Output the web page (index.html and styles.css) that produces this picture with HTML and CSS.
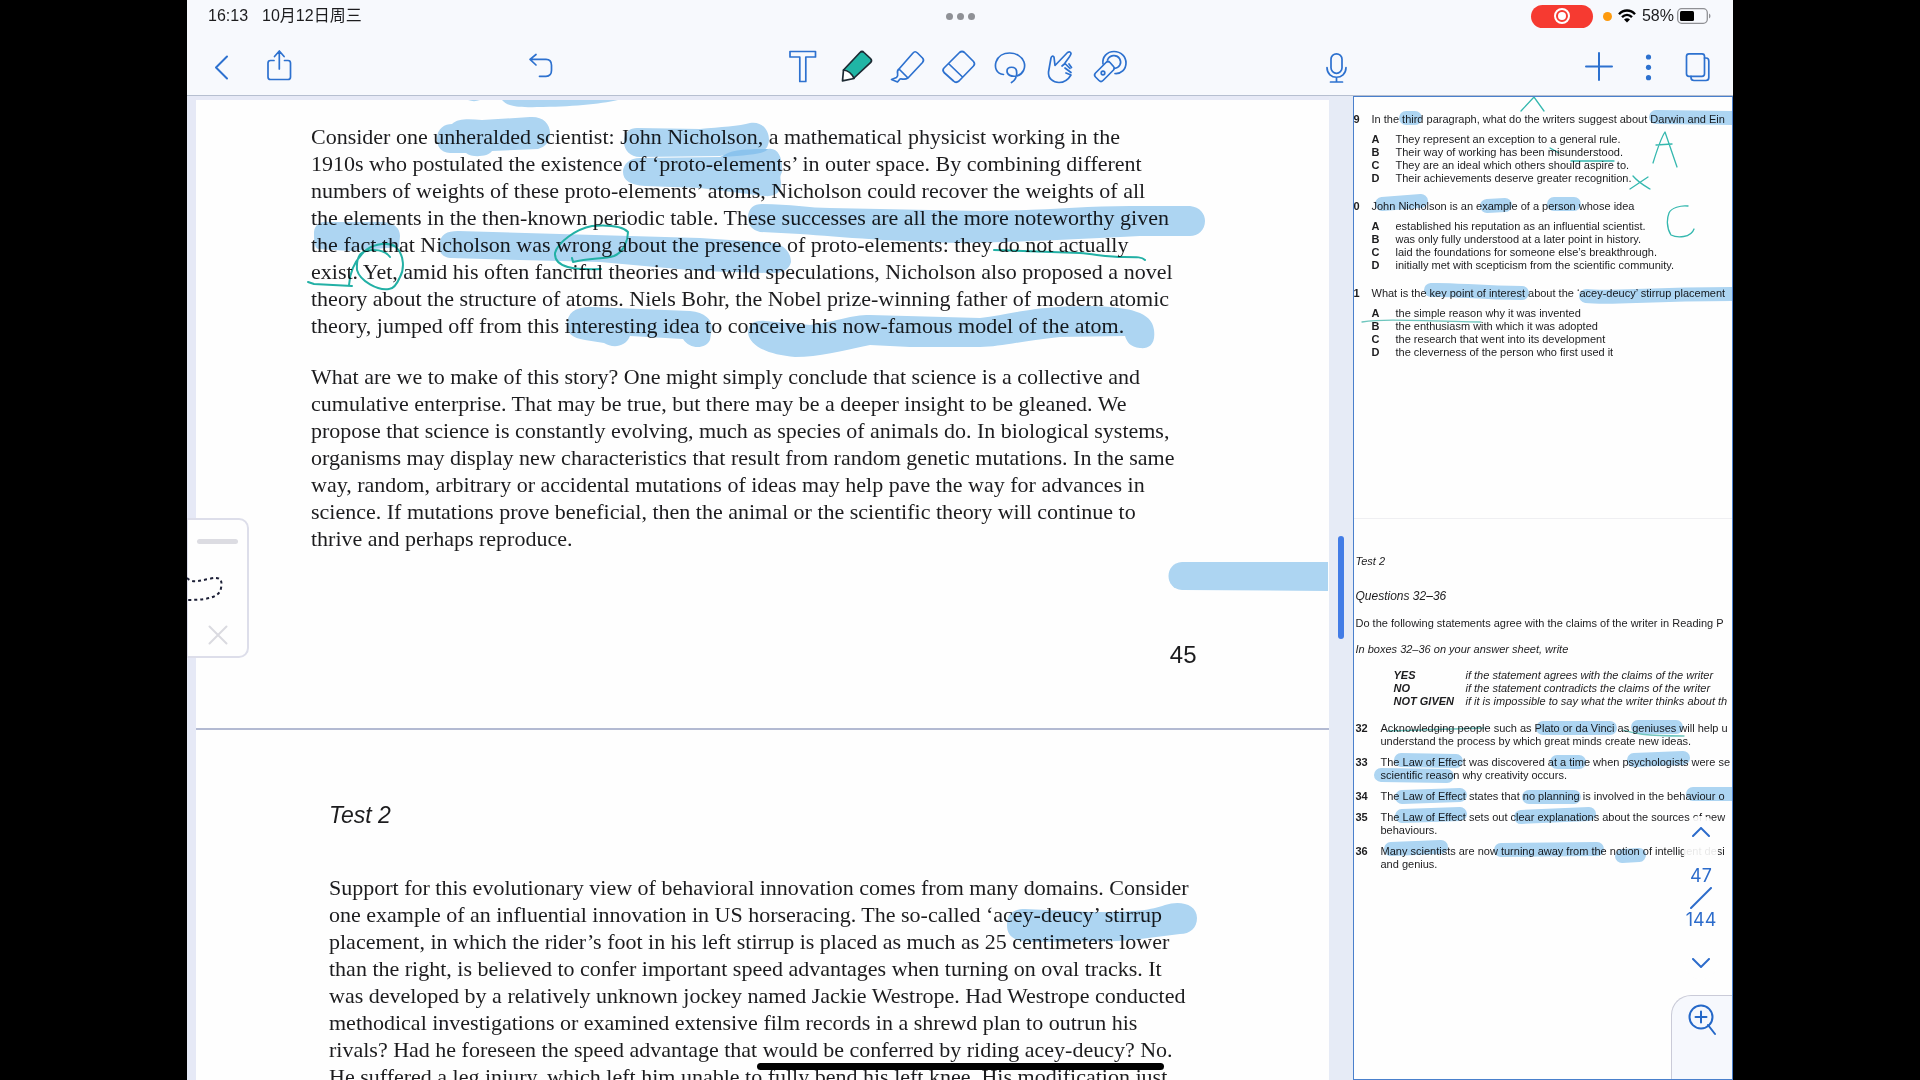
FILE: index.html
```html
<!DOCTYPE html>
<html lang="en">
<head>
<meta charset="utf-8">
<title>Notes</title>
<link rel="stylesheet" href="styles.css">
</head>
<body>
<div class="app">
  <header class="chrome">
    <div class="status">
      <div class="clock"><span>16:13</span><span>10月12日周三</span></div>
      <button class="multitask" aria-label="Multitasking"><i></i><i></i><i></i></button>
      <div class="indicators">
        <span class="record"><svg width="18" height="18" viewBox="0 0 18 18"><circle cx="9" cy="9" r="7" fill="none" stroke="#fff" stroke-width="2"/><circle cx="9" cy="9" r="4" fill="#fff"/></svg></span>
        <span class="orange"></span>
        <svg class="wifi" width="18" height="14" viewBox="0 0 18 14"><g fill="none" stroke="#000" stroke-width="2.4"><path d="M1 5.2C5.500 .3 12.500 .3 17 5.200"/><path d="M4 8.200c3-3 7-3 10 0"/></g><path d="M6 10.400c2-1.700 4-1.700 6 0L9 13.600z"/></svg>
        <span class="percent">58%</span>
        <svg class="battery" width="35" height="16" viewBox="0 0 35 16"><rect x=".7" y=".7" width="29.600" height="14.600" rx="4" fill="none" stroke="#8f9094" stroke-width="1.300"/><rect x="3" y="3" width="14" height="10" rx="1.500"/><path d="M32 5.500c2 1 2 4 0 5z" fill="#8f9094"/></svg>
      </div>
    </div>
    <nav class="toolbar" aria-label="Note tools">
      <div class="group nav-left">
        <button class="tool" aria-label="Back"><svg viewBox="205 50 34 34"><path d="M227 56.500 216 67.500 227 78.500" stroke-width="2"/></svg></button>
        <button class="tool" aria-label="Share"><svg viewBox="263 50 34 34"><path d="M274 60.500h-3.500q-2.500 0-2.500 2.500v14q0 2.500 2.500 2.500h17.500q2.500 0 2.500-2.500V63q0-2.500-2.500-2.500H284.500M279.300 69V51M274.500 56.500l4.800-5.500 4.800 5.500"/></svg></button>
      </div>
      <div class="group undo">
        <button class="tool" aria-label="Undo"><svg viewBox="525 50 34 34"><path d="M536 54.500 530 59.300 536 65M530 59.300H546q5.500 0 5.500 6v5q0 6-5.500 6H539.500"/></svg></button>
      </div>
      <div class="group tools">
        <button class="tool" aria-label="Text"><svg viewBox="786 50 34 34"><path d="M790 51.500h25.500V57h-9.700v24.500h-6V57H790z"/></svg></button>
        <button class="tool" aria-label="Pen"><svg viewBox="837 50 34 34"><path d="M843.500 70 860 52.500q2-2 4 0l6.500 6q2 2 0 4.200L854 78z" fill="#20b5a5" stroke="#1d2a33"/><path d="M843.500 70 842.500 80.800 854 78.500C852 74 848 70.500 843.500 70z" fill="#fff" stroke="#1d2a33"/></svg></button>
        <button class="tool" aria-label="Highlighter"><svg viewBox="888 50 34 34"><path d="M899 69 913 53q2-2.500 4.500 0l5 5q2 2 0 4.500L908 78zM899 69c-4 3 1 6-2.500 8.500L891.500 79.500l6 2.500 2.500-3c3-.5 4 1.500 8-1"/></svg></button>
        <button class="tool" aria-label="Eraser"><svg viewBox="939 50 34 34"><path d="M944 68 959.500 52.500q2.500-2 5 0l9 9q2 2.500 0 4.500L959 81q-3 2.500-5.500 0l-9.500-8.500q-2-2.500 0-4.500zM949 64 962.500 77"/></svg></button>
        <button class="tool" aria-label="Lasso"><svg viewBox="990 50 34 34"><path d="M1003.500 74.500C996 74 994.500 67 996 62c4-12 23-12 28 0 2 6-1 12-7 14-6 1-10-1-10-5 0-5 9-5 9.500 0 1 6-1 9-5 11.500"/></svg></button>
        <button class="tool" aria-label="Pointer"><svg viewBox="1041 50 34 34"><path d="M1048.500 72 1051 58q1-3 3-1l1 8.500L1067.500 52.500q3-1.500 3.500 1c0 2-3 5-6 9.500M1062 66l3-2.500 5 5M1065 68l6 4.500M1069 64l2.500 3.500M1066 73l5 2C1068 80 1065 82.500 1059 82.500c-6 0-11-4-10.500-10.500"/></svg></button>
        <button class="tool" aria-label="Tape"><svg viewBox="1092 50 34 34"><path d="M1103 64C1102 57 1107 51.500 1114 51.500c7 0 12 5 12 11.500s-5 11-11 10.500M1107.500 60c2-5 9-6 12-1.500 3 5-.5 9.500-5 10"/><path d="M1095.500 73 1106 62.500q2-2 4 0l3.500 4q1.500 1.500 0 3.500L1103 80.500q-2 2-4 0l-3.500-3.500q-2-2 0-4z"/><circle cx="1103" cy="73" r="1.800"/></svg></button>
      </div>
      <div class="group mic">
        <button class="tool" aria-label="Record audio"><svg viewBox="1321 50 34 34"><rect x="1331" y="53.800" width="11" height="19.500" rx="5.500"/><path d="M1327 67.500c0 13 19 13 19 0M1336.500 77.300v4.500M1330.500 82h12"/></svg></button>
      </div>
      <div class="group nav-right">
        <button class="tool" aria-label="Add"><svg viewBox="1583 50 34 34"><path d="M1586 66.500h26M1599 53v27" stroke-width="2"/></svg></button>
        <button class="tool" aria-label="More"><svg viewBox="1632 50 34 34"><g fill="#2d71cf" stroke="none"><circle cx="1648.500" cy="57" r="2.600"/><circle cx="1648.500" cy="67.300" r="2.600"/><circle cx="1648.500" cy="77.700" r="2.600"/></g></svg></button>
        <button class="tool" aria-label="Pages"><svg viewBox="1681 50 34 34"><rect x="1686.500" y="53.800" width="18" height="22.500" rx="2.500"/><path d="M1704.500 58h1.500q2.800 0 2.800 3v16.500q0 3-2.800 3h-12q-3 0-3-3v-1.200"/></svg></button>
      </div>
    </nav>
  </header>

  <main class="split">
    <section class="reader" aria-label="Reading passage">
      <article class="sheet first">
        <p>Consider one unheralded scientist: John Nicholson, a mathematical physicist working in the<br>1910s who postulated the existence of ‘proto-elements’ in outer space. By combining different<br>numbers of weights of these proto-elements’ atoms, Nicholson could recover the weights of all<br>the elements in the then-known periodic table. These successes are all the more noteworthy given<br>the fact that Nicholson was wrong about the presence of proto-elements: they do not actually<br>exist. Yet, amid his often fanciful theories and wild speculations, Nicholson also proposed a novel<br>theory about the structure of atoms. Niels Bohr, the Nobel prize-winning father of modern atomic<br>theory, jumped off from this interesting idea to conceive his now-famous model of the atom.</p>
        <p>What are we to make of this story? One might simply conclude that science is a collective and<br>cumulative enterprise. That may be true, but there may be a deeper insight to be gleaned. We<br>propose that science is constantly evolving, much as species of animals do. In biological systems,<br>organisms may display new characteristics that result from random genetic mutations. In the same<br>way, random, arbitrary or accidental mutations of ideas may help pave the way for advances in<br>science. If mutations prove beneficial, then the animal or the scientific theory will continue to<br>thrive and perhaps reproduce.</p>
        <div class="folio">45</div>
        <svg class="ink" width="1132" height="628" viewBox="196 100 1132 628" aria-hidden="true">
          <g class="marker">
            <path d="M502 100C507 106 517 108 537 107 570 107 600 104 618 100z"/>
            <path d="M468 100c4 1.500 8 1.500 12 0z"/>
            <path d="M437 139C437 128 445 124 452 124 458 118 470 119 482 120L530 117C542 116 550 123 550 133 550 142 545 147 538 149L492 151C488 157 472 158 466 153L450 153C440 152 437 146 437 139z"/>
            <path d="M624 142C624 132 630 128 637 128L700 129C720 127 740 126 750 123 762 121 769 130 769 140 768 148 766 149 762 151L740 152 720 156 640 157C630 157 624 150 624 142z"/>
            <path d="M623 172C623 164 630 158 640 158L720 157C730 151 745 151 768 149 778 147 783 158 782 172 780 176 780 178 781 182 782 192 775 197 765 196L700 188 645 186C630 185 623 180 623 172z"/>
            <path class="double" d="M722 157C728 150 745 149 768 149 764 154 750 155 722 157z"/>
            <path d="M748 218C748 208 754 204 762 204 790 204 810 208 830 208L980 211C1040 211 1080 206 1130 206L1190 206C1200 207 1205 214 1205 221 1205 230 1198 236 1190 236L1140 236C1080 239 1000 243 960 243 900 242 840 237 800 234L760 232C752 230 748 225 748 218z"/>
            <path d="M314 232C315 223 322 221 330 222L384 222C394 223 400 228 400 236L399 247 350 251 318 249C314 247 314 240 314 232z"/>
            <path d="M439 246C440 234 447 231 458 231L560 234 700 238 775 243C788 247 791 256 791 262 789 271 780 274 768 273L700 271 600 262 520 260 450 258C442 257 439 252 439 246z"/>
            <path d="M567 325C567 313 575 307 590 307L690 311C705 312 712 320 712 328L710 340C706 349 690 350 683 339L630 336C625 348 612 348 604 343L585 340C572 338 567 333 567 325z"/>
            <path d="M748 333C748 323 756 320 765 321L810 325C840 321 850 315 870 315L980 318C1010 315 1030 306 1090 306 1130 307 1152 312 1154 330 1156 345 1148 349 1140 348 1130 347 1127 342 1125 336L1060 337C1020 341 1000 347 980 347L910 347 870 345C840 351 820 357 795 357 770 355 750 347 748 333z"/>
            <path d="M1328 562H1182C1164 563 1164 589 1182 590L1328 591z"/>
          </g>
          <g class="pen">
            <path d="M572 258 573 262C590 258 604 259 614 256 624 252 628 240 628 232 622 226 606 225 592 226 576 229 558 242 555 253 554 268 575 270 601 269"/>
            <path d="M349 285C350 268 357 258 366 250 376 243 388 242 396 247 405 256 404 270 400 277 397 284 393 289 389 289 378 291 360 281 357 270 356 254 362 250 374 250 381 250 387 253 390 257"/>
            <path d="M308 282 314 284 352 286M994 250 1051 252 1080 253C1100 255 1110 257 1124 257 1138 257 1142 257 1145 260"/>
          </g>
        </svg>
      </article>
      <article class="sheet second">
        <h2>Test 2</h2>
        <p>Support for this evolutionary view of behavioral innovation comes from many domains. Consider<br>one example of an influential innovation in US horseracing. The so-called ‘acey-deucy’ stirrup<br>placement, in which the rider’s foot in his left stirrup is placed as much as 25 centimeters lower<br>than the right, is believed to confer important speed advantages when turning on oval tracks. It<br>was developed by a relatively unknown jockey named Jackie Westrope. Had Westrope conducted<br>methodical investigations or examined extensive film records in a shrewd plan to outrun his<br>rivals? Had he foreseen the speed advantage that would be conferred by riding acey-deucy? No.<br>He suffered a leg injury, which left him unable to fully bend his left knee. His modification just</p>
        <svg class="ink" width="1132" height="350" viewBox="196 730 1132 350" aria-hidden="true">
          <g class="marker"><path d="M1007 925C1007 913 1014 909 1025 909L1090 912C1140 912 1150 910 1165 905 1180 900 1197 904 1197 918 1197 928 1190 934 1180 934L1140 939C1110 943 1080 941 1030 942 1012 941 1007 935 1007 925z"/></g>
        </svg>
      </article>
      <aside class="clip" aria-label="Clip">
        <span class="grip"></span>
        <svg class="dashes" width="61" height="40" viewBox="188 570 61 40"><path d="M188 579c6 6 14 2 22 1 10-3 14 0 12 9-1 8-10 12-34 12"/></svg>
        <button class="close" aria-label="Close"><svg width="20" height="20" viewBox="0 0 20 20"><path d="M1.500 1.500 18.500 18.500M18.500 1.500 1.500 18.500"/></svg></button>
      </aside>
    </section>

    <div class="divider"><span class="handle"></span></div>

    <section class="quiz" aria-label="Questions">
      <div class="page top">
        <div class="q"><b>9</b><span>In the third paragraph, what do the writers suggest about Darwin and Ein</span></div>
        <div class="options">
          <b>A</b><span>They represent an exception to a general rule.</span>
          <b>B</b><span>Their way of working has been misunderstood.</span>
          <b>C</b><span>They are an ideal which others should aspire to.</span>
          <b>D</b><span>Their achievements deserve greater recognition.</span>
        </div>
        <div class="q"><b>0</b><span>John Nicholson is an example of a person whose idea</span></div>
        <div class="options">
          <b>A</b><span>established his reputation as an influential scientist.</span>
          <b>B</b><span>was only fully understood at a later point in history.</span>
          <b>C</b><span>laid the foundations for someone else’s breakthrough.</span>
          <b>D</b><span>initially met with scepticism from the scientific community.</span>
        </div>
        <div class="q"><b>1</b><span>What is the key point of interest about the ‘acey-deucy’ stirrup placement</span></div>
        <div class="options">
          <b>A</b><span>the simple reason why it was invented</span>
          <b>B</b><span>the enthusiasm with which it was adopted</span>
          <b>C</b><span>the research that went into its development</span>
          <b>D</b><span>the cleverness of the person who first used it</span>
        </div>
      </div>
      <div class="page bottom">
        <h3>Test 2</h3>
        <h4>Questions 32–36</h4>
        <p>Do the following statements agree with the claims of the writer in Reading P</p>
        <p><em>In boxes 32–36 on your answer sheet, write</em></p>
        <dl>
          <dt>YES</dt><dd>if the statement agrees with the claims of the writer</dd>
          <dt>NO</dt><dd>if the statement contradicts the claims of the writer</dd>
          <dt>NOT GIVEN</dt><dd>if it is impossible to say what the writer thinks about th</dd>
        </dl>
        <div class="statements">
          <b>32</b><span>Acknowledging people such as Plato or da Vinci as geniuses will help u<br>understand the process by which great minds create new ideas.</span>
          <b>33</b><span>The Law of Effect was discovered at a time when psychologists were se<br>scientific reason why creativity occurs.</span>
          <b>34</b><span>The Law of Effect states that no planning is involved in the behaviour o</span>
          <b>35</b><span>The Law of Effect sets out clear explanations about the sources of new<br>behaviours.</span>
          <b>36</b><span>Many scientists are now turning away from the notion of intelligent desi<br>and genius.</span>
        </div>
      </div>
      <svg class="ink" width="380" height="983" viewBox="1353 97 380 983" aria-hidden="true">
        <g class="marker wide">
          <path d="M1405 118h9M1655 117 1740 118M1381 204 1420 201M1486 206 1504 205M1553 204h20M1430 290C1450 289 1480 293 1521 293M1585 296C1610 299 1640 294 1740 294"/>
          <path d="M1542 728h67M1637 727h38M1400 760 1455 761M1556 762h22M1633 760 1682 758M1380 775 1446 776M1401 797 1459 795M1528 797h45M1692 794h48M1401 816 1459 814M1520 817 1588 814M1390 849 1440 847M1500 850 1596 849M1621 856 1638 855"/>
        </g>
        <g class="pen fine">
          <path d="M1520 111 1533 97 1543 111M1652 163C1656 150 1660 138 1664 132L1676 167M1655 145 1671 144M1549 148 1558 153M1570 161h43M1632 176C1638 183 1644 186 1649 189M1647 177 1629 189M1687 206C1680 205 1670 208 1668 213 1666 218 1665 227 1670 235 1676 238 1690 238 1693 229"/>
          <path class="faint" d="M1361 322C1380 319 1400 320 1480 322M1387 731 1483 728M1622 730C1632 733 1640 736 1683 736"/>
        </g>
      </svg>
      <nav class="pager" aria-label="Page">
        <button aria-label="Previous page"><svg width="18" height="10" viewBox="0 0 18 10"><path d="M1 9 9 1 17 9"/></svg></button>
        <span class="now">47</span>
        <svg width="22" height="22" viewBox="0 0 22 22"><path d="M1 21 21 1"/></svg>
        <span class="total">144</span>
        <button aria-label="Next page"><svg width="18" height="10" viewBox="0 0 18 10"><path d="M1 1 9 9 17 1"/></svg></button>
      </nav>
      <button class="magnify" aria-label="Zoom"><svg width="28" height="32" viewBox="0 0 28 32"><circle cx="13" cy="13" r="11.500"/><path d="M13 7.500v11M7.500 13h11M20 21 27 30"/></svg></button>
    </section>
  </main>
  <span class="home"></span>
</div>
</body>
</html>
```
FILE: styles.css
```css
* { box-sizing: border-box; }
body {
  margin: 0;
  padding: 0 187px;
  background: #000;
  color: #1c1c1e;
  font-family: "Liberation Sans", "Noto Sans CJK SC", sans-serif;
}
p, h2, h3, h4, dl, dd { margin: 0; }
button { margin: 0; padding: 0; border: 0; background: none; font: inherit; color: inherit; }
svg { display: block; }

.app {
  position: relative;
  display: flex;
  flex-direction: column;
  height: 100vh;
  overflow: hidden;
  background: #f7f9fd;
}

/* status bar and toolbar */
.chrome { border-bottom: 1px solid #b6bfd0; }
.status {
  display: grid;
  grid-template-columns: 1fr auto 1fr;
  align-items: center;
  height: 32px;
  padding: 0 21px;
  font-size: 16px;
}
.clock { display: flex; align-items: baseline; gap: 14px; line-height: 20px; }
.multitask { display: flex; gap: 4px; }
.multitask i { width: 7px; height: 7px; border-radius: 50%; background: #8f9196; }
.indicators { display: flex; align-items: center; justify-content: flex-end; }
.record {
  display: grid;
  place-items: center;
  width: 62px;
  height: 23px;
  margin-right: 10px;
  border-radius: 12px;
  background: #f63a31;
}
.orange { width: 9px; height: 9px; margin-right: 6px; border-radius: 50%; background: #fd9a0e; }
.wifi { margin-right: 6px; }
.percent { margin-right: 3px; line-height: 20px; }

.toolbar {
  display: grid;
  grid-template-columns: 92px 7fr 34px 7fr 340px 6fr 34px 7fr 132px;
  height: 63px;
  padding: 18px 18px 11px;
}
.group { display: flex; }
.nav-left { grid-column: 1; gap: 24px; }
.undo { grid-column: 3; }
.tools { grid-column: 5; gap: 17px; }
.mic { grid-column: 7; }
.nav-right { grid-column: 9; gap: 15px; }
.tool { width: 34px; height: 34px; }
.tool svg {
  width: 34px;
  height: 34px;
  overflow: visible;
  fill: none;
  stroke: #2d71cf;
  stroke-width: 1.700;
  stroke-linecap: round;
  stroke-linejoin: round;
}

/* split view */
.split {
  display: grid;
  grid-template-columns: minmax(0, 3fr) 24px minmax(0, 1fr);
  flex: 1;
  min-height: 0;
}
.reader {
  position: relative;
  padding: 4px 0 0 9px;
  overflow: hidden;
  background: #e6e9f6;
}
.sheet {
  position: relative;
  overflow: hidden;
  background: #fefefe;
  font-family: "Liberation Serif", serif;
  font-size: 22px;
  line-height: 27px;
  white-space: nowrap;
}
.sheet p + p { margin-top: 24px; }
.first { padding: 23px 132px 60px 115px; border-bottom: 2px solid #b3bad2; }
.folio {
  margin-top: 89px;
  font-family: "Liberation Sans", sans-serif;
  font-size: 24px;
  text-align: right;
}
.second { height: 400px; padding: 72px 40px 0 133px; }
.second h2 {
  margin-bottom: 45px;
  font-family: "Liberation Sans", sans-serif;
  font-size: 23px;
  font-style: italic;
  font-weight: 400;
}

.ink { position: absolute; top: 0; left: 0; mix-blend-mode: multiply; pointer-events: none; }
.marker { fill: #aed6f3; }
.double { fill: #8cc4ee; }
.wide { fill: none; stroke: #aed6f3; stroke-width: 14; stroke-linecap: round; }
.pen { fill: none; stroke: #22b1a6; stroke-width: 2; stroke-linecap: round; stroke-linejoin: round; }
.fine { stroke: #35b9b0; stroke-width: 1.300; }
.faint { stroke: #6fc7bf; }

.clip {
  position: absolute;
  top: 422px;
  left: 0;
  display: flex;
  flex-direction: column;
  align-items: center;
  width: 62px;
  height: 140px;
  padding-top: 19px;
  border: 2px solid #dddeea;
  border-left-width: 1px;
  border-radius: 0 10px 10px 0;
  background: #fefefe;
}
.grip { width: 41px; height: 5px; border-radius: 3px; background: #dcdce2; }
.dashes { margin: 25px 0 16px; fill: none; stroke: #1c1f36; stroke-width: 2; stroke-dasharray: 3 3; }
.close svg { fill: none; stroke: #dadae0; stroke-width: 2; stroke-linecap: round; }

.divider { display: flex; justify-content: center; padding-top: 440px; background: #e6ebf6; }
.handle { width: 6px; height: 103px; border-radius: 3px; background: #427ce6; }

/* question pane */
.quiz {
  position: relative;
  overflow: hidden;
  border: 1px solid #4a80cc;
  background: #fefefe;
  font-size: 11px;
  line-height: 13px;
  white-space: nowrap;
}
.page { overflow: hidden; }
.top { height: 422px; padding: 16px 0 0; border-bottom: 1px solid #efeff2; }
.q { display: grid; grid-template-columns: 18px auto; }
.options { display: grid; grid-template-columns: 24px auto; padding: 7px 0 15px 18px; }
.bottom { padding: 36px 0 0 2px; }
.bottom h3 { font-size: 11px; font-style: italic; font-weight: 400; }
.bottom h4 { margin: 22px 0 14px; font-size: 12px; font-style: italic; font-weight: 400; }
.bottom p { margin-bottom: 13px; }
.bottom dl { display: grid; grid-template-columns: 72px auto; padding: 0 0 14px 38px; font-style: italic; }
.bottom dt { font-weight: 700; }
.statements { display: grid; grid-template-columns: 25px auto; row-gap: 8px; }

.pager {
  position: absolute;
  top: 719px;
  right: 14px;
  display: flex;
  flex-direction: column;
  align-items: center;
  width: 34px;
  padding: 11px 0;
  border-radius: 17px;
  background: rgba(254, 254, 254, 0.9);
  color: #2d6ccb;
  font-family: Inter, sans-serif;
  font-size: 18px;
  line-height: 22px;
}
.pager svg { fill: none; stroke: #2d6ccb; stroke-width: 2; stroke-linecap: round; }
.now { margin-top: 28px; }
.total { margin: 0 0 27px; }
.magnify {
  position: absolute;
  right: -1px;
  bottom: -1px;
  width: 62px;
  height: 85px;
  padding: 8px 0 0 16px;
  border: solid #cacbd8;
  border-width: 1px 0 0 1px;
  border-radius: 20px 0 0 0;
  background: #f6f8fd;
}
.magnify svg { margin-bottom: 45px; fill: none; stroke: #2568c8; stroke-width: 2; stroke-linecap: round; }

.home {
  position: absolute;
  bottom: 10px;
  left: 50%;
  width: 407px;
  height: 7px;
  margin-left: -203px;
  border-radius: 4px;
  background: #000;
}
```
